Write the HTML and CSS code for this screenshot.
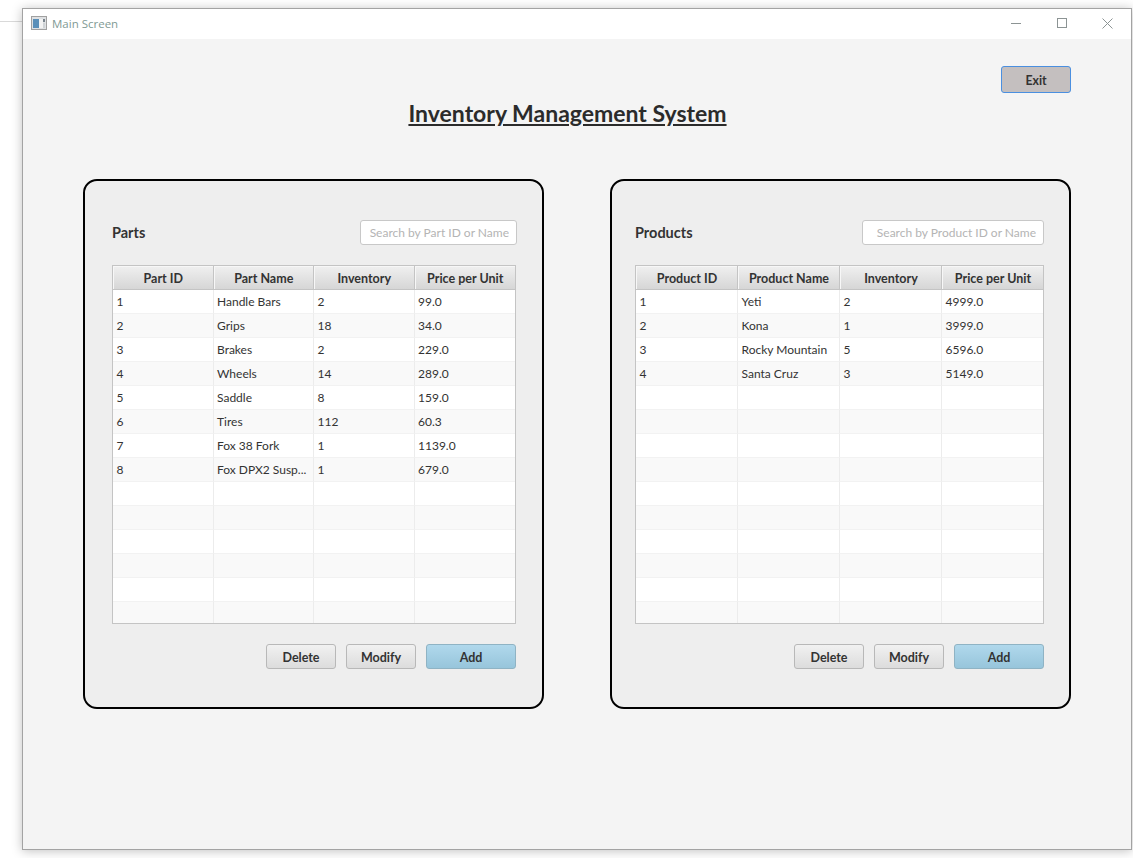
FILE: index.html
```html
<!DOCTYPE html>
<html lang="en">
<head>
    <meta charset="UTF-8">
    <title>Main Screen</title>
    <link rel="stylesheet" href="styles.css">
</head>
<body>
    <div class="desktop-line"></div>

    <div class="window">
        <div class="titlebar">
            <div class="title">
                <svg class="app-icon" width="16" height="14" viewBox="0 0 16 14">
                    <rect x="0.5" y="0.5" width="15" height="13" fill="#dfe1e3" stroke="#a0a0a0"/>
                    <rect x="2" y="3" width="6" height="9" fill="#5b8fb8"/>
                    <rect x="8" y="3" width="4" height="9" fill="#f2f2f2"/>
                    <rect x="12" y="3" width="2" height="3" fill="#78838c"/>
                    <rect x="12" y="7" width="2" height="5" fill="#cfd3d6"/>
                </svg>
                <span>Main Screen</span>
            </div>
            <div class="window-controls">
                <svg width="11" height="11" viewBox="0 0 11 11"><path d="M1 5.5H11" stroke="#8c9494" fill="none"/></svg>
                <svg width="11" height="11" viewBox="0 0 11 11"><rect x="1.5" y="0.5" width="9" height="9" stroke="#8c9494" fill="none"/></svg>
                <svg width="11" height="11" viewBox="0 0 11 11"><path d="M0.5 0.5L10.5 10.5M10.5 0.5L0.5 10.5" stroke="#8c9494" fill="none"/></svg>
            </div>
        </div>

        <div class="content">
            <div class="top-bar">
                <button class="btn btn-exit">Exit</button>
            </div>
            <h1>Inventory Management System</h1>

            <div class="panels">
                <section class="panel panel-parts">
                    <div class="panel-head">
                        <h2>Parts</h2>
                        <input type="text" class="search search-parts" placeholder="Search by Part ID or Name">
                    </div>
                    <div class="table-wrap">
                        <table class="parts-table">
                            <thead>
                                <tr><th>Part ID</th><th>Part Name</th><th>Inventory</th><th>Price per Unit</th></tr>
                            </thead>
                            <tbody>
                                <tr><td>1</td><td>Handle Bars</td><td>2</td><td>99.0</td></tr>
                                <tr><td>2</td><td>Grips</td><td>18</td><td>34.0</td></tr>
                                <tr><td>3</td><td>Brakes</td><td>2</td><td>229.0</td></tr>
                                <tr><td>4</td><td>Wheels</td><td>14</td><td>289.0</td></tr>
                                <tr><td>5</td><td>Saddle</td><td>8</td><td>159.0</td></tr>
                                <tr><td>6</td><td>Tires</td><td>112</td><td>60.3</td></tr>
                                <tr><td>7</td><td>Fox 38 Fork</td><td>1</td><td>1139.0</td></tr>
                                <tr><td>8</td><td>Fox DPX2 Susp...</td><td>1</td><td>679.0</td></tr>
                                <tr><td></td><td></td><td></td><td></td></tr>
                                <tr><td></td><td></td><td></td><td></td></tr>
                                <tr><td></td><td></td><td></td><td></td></tr>
                                <tr><td></td><td></td><td></td><td></td></tr>
                                <tr><td></td><td></td><td></td><td></td></tr>
                                <tr><td></td><td></td><td></td><td></td></tr>
                            </tbody>
                        </table>
                    </div>
                    <div class="actions">
                        <button class="btn">Delete</button>
                        <button class="btn">Modify</button>
                        <button class="btn btn-add">Add</button>
                    </div>
                </section>

                <section class="panel panel-products">
                    <div class="panel-head">
                        <h2>Products</h2>
                        <input type="text" class="search search-products" placeholder="Search by Product ID or Name">
                    </div>
                    <div class="table-wrap">
                        <table class="products-table">
                            <thead>
                                <tr><th>Product ID</th><th>Product Name</th><th>Inventory</th><th>Price per Unit</th></tr>
                            </thead>
                            <tbody>
                                <tr><td>1</td><td>Yeti</td><td>2</td><td>4999.0</td></tr>
                                <tr><td>2</td><td>Kona</td><td>1</td><td>3999.0</td></tr>
                                <tr><td>3</td><td>Rocky Mountain</td><td>5</td><td>6596.0</td></tr>
                                <tr><td>4</td><td>Santa Cruz</td><td>3</td><td>5149.0</td></tr>
                                <tr><td></td><td></td><td></td><td></td></tr>
                                <tr><td></td><td></td><td></td><td></td></tr>
                                <tr><td></td><td></td><td></td><td></td></tr>
                                <tr><td></td><td></td><td></td><td></td></tr>
                                <tr><td></td><td></td><td></td><td></td></tr>
                                <tr><td></td><td></td><td></td><td></td></tr>
                                <tr><td></td><td></td><td></td><td></td></tr>
                                <tr><td></td><td></td><td></td><td></td></tr>
                                <tr><td></td><td></td><td></td><td></td></tr>
                                <tr><td></td><td></td><td></td><td></td></tr>
                            </tbody>
                        </table>
                    </div>
                    <div class="actions">
                        <button class="btn">Delete</button>
                        <button class="btn">Modify</button>
                        <button class="btn btn-add">Add</button>
                    </div>
                </section>
            </div>
        </div>
    </div>
</body>
</html>
```

FILE: styles.css
```css
html, body {
    height: 100%;
}
body {
    margin: 0;
    padding: 8px 1px 0 22px;
    box-sizing: border-box;
    background-color: #fff;
    font-family: Lato, "Open Sans", sans-serif;
    color: #333;
    overflow: hidden;
}
.desktop-line {
    position: absolute;
    left: 0;
    top: 21px;
    width: 22px;
    height: 1px;
    background-color: #d9d9d9;
}
.window {
    position: relative;
    height: 842px;
    box-sizing: border-box;
    border: 1px solid #a3a3a3;
    box-shadow: 0 1px 10px rgba(0, 0, 0, 0.25);
    display: flex;
    flex-direction: column;
}
.titlebar {
    height: 30px;
    flex: none;
    background-color: #fff;
    display: flex;
    justify-content: space-between;
    align-items: center;
}
.title {
    display: flex;
    align-items: center;
    gap: 5px;
    padding-left: 8px;
    padding-bottom: 2px;
    font-family: "Open Sans", sans-serif;
    font-size: 11.5px;
    color: #7f9a94;
}
.window-controls {
    display: flex;
    gap: 35px;
    padding-right: 18px;
    padding-bottom: 2px;
}
.window-controls svg {
    display: block;
}
.content {
    flex: 1;
    background-color: #f4f4f4;
    padding: 27px 60px 0;
}
.top-bar {
    display: flex;
    justify-content: flex-end;
}
h1 {
    margin: 0;
    padding-right: 19px;
    height: 80px;
    padding-top: 6px;
    box-sizing: border-box;
    text-align: center;
    font-size: 23px;
    line-height: 28px;
    font-weight: 700;
    text-decoration: underline;
    color: #2b2b2b;
}
.panels {
    display: flex;
    gap: 66px;
    margin-top: 6px;
}
.panel {
    width: 461px;
    height: 530px;
    box-sizing: border-box;
    border: 2px solid #000;
    border-radius: 14px;
    background-color: #eee;
    padding-top: 39px;
}
.panel-parts {
    padding-left: 27px;
    padding-right: 26px;
}
.panel-products {
    padding-left: 23px;
    padding-right: 25px;
}
.panel-head {
    display: flex;
    justify-content: space-between;
    align-items: center;
    height: 25px;
    margin-bottom: 20px;
}
.panel-parts .panel-head {
    margin-right: -1px;
}
h2 {
    margin: 0;
    font-size: 14.5px;
    line-height: 18px;
    font-weight: 700;
    color: #333;
}
.search {
    height: 25px;
    box-sizing: border-box;
    border: 1px solid #c8c8c8;
    border-radius: 3px;
    background-color: #fff;
    padding: 0 7px;
    font-family: Lato, sans-serif;
    font-size: 12px;
    text-align: right;
}
.search::placeholder {
    color: #b4b4b4;
    opacity: 1;
}
.search-parts {
    width: 157px;
}
.search-products {
    width: 182px;
}
.table-wrap {
    height: 359px;
    box-sizing: border-box;
    border: 1px solid #c4c4c4;
    background-color: #fff;
    overflow: hidden;
}
.parts-table, .products-table {
    border-collapse: separate;
    border-spacing: 0;
    table-layout: fixed;
    width: 100%;
}
th, td {
    box-sizing: border-box;
    border-right: 1px solid #ececec;
    padding: 0 3px;
    text-align: left;
    overflow: hidden;
    white-space: nowrap;
}
th {
    height: 24px;
    padding-top: 2px;
    padding-left: 4px;
    border-right-color: #c4c4c4;
    border-bottom: 1px solid #c4c4c4;
    box-shadow: inset 1px 1px 0 #f7f7f7;
    background: linear-gradient(#f0f0f0, #d6d6d6);
    text-align: center;
    font-size: 12.5px;
    font-weight: 700;
    color: #333;
}
td {
    height: 24px;
    padding-left: 3.5px;
    border-bottom: 1px solid #f2f2f2;
    font-size: 12px;
    color: #333;
}
th:last-child, td:last-child {
    border-right: 0;
}
.products-table th:last-child, .products-table td:last-child {
    width: 101px;
}
tbody tr:nth-child(even) td {
    background-color: #f9f9f9;
}
.actions {
    display: flex;
    justify-content: flex-end;
    gap: 10px;
    margin-top: 20px;
}
.btn {
    width: 70px;
    height: 25px;
    box-sizing: border-box;
    border: 1px solid #b8b8b8;
    border-radius: 3px;
    padding: 1px 0 0;
    background: linear-gradient(#f1f1f1, #dcdcdc);
    font-family: Lato, sans-serif;
    font-size: 12.5px;
    font-weight: 700;
    color: #333;
}
.btn-add {
    width: 90px;
    border-color: #8fb3c4;
    background: linear-gradient(#b0d8ec, #97c5db);
}
.btn-exit {
    height: 27px;
    font-size: 12.3px;
    border: 1px solid #4a8fe0;
    background: #c4bfbf;
}
```
